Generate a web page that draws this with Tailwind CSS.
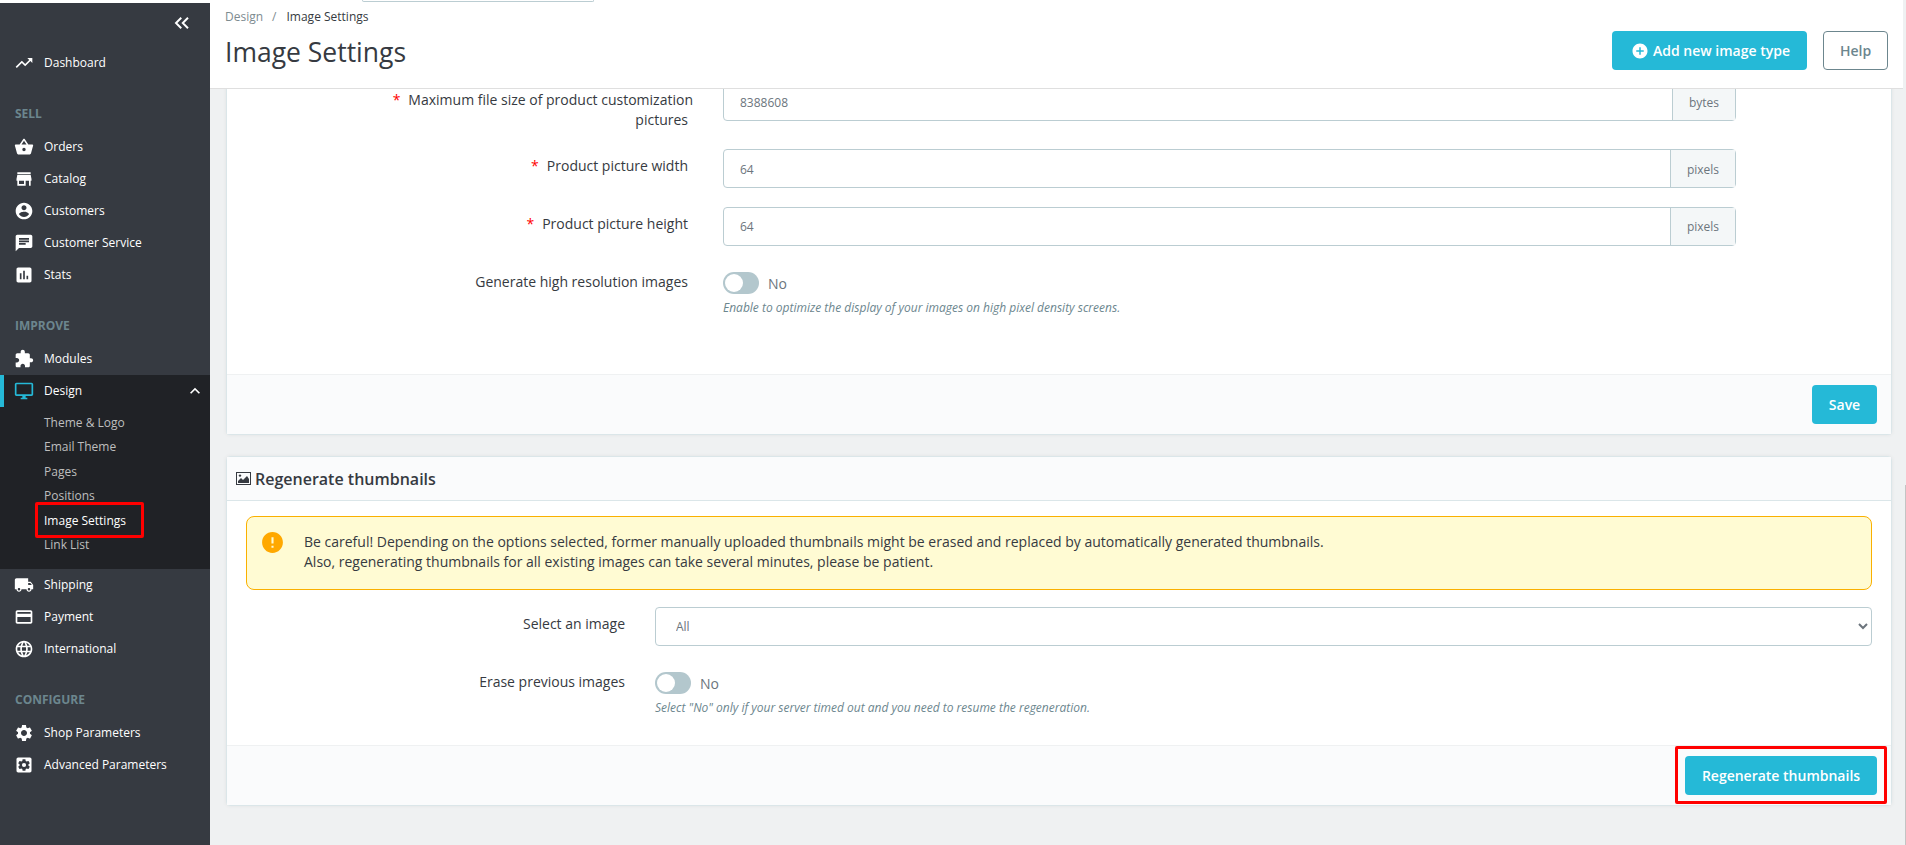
<!DOCTYPE html>
<html lang="en">
<head>
  <meta charset="UTF-8" />
  <title>Image Settings</title>
  <script src="https://cdn.jsdelivr.net/npm/@tailwindcss/browser@4"></script>
</head>
<body class="relative h-[845px] overflow-hidden bg-white font-['Open_Sans',sans-serif] text-[#363a41]">

  <div class="flex h-[845px]">

    <!-- Sidebar -->
    <aside class="w-[210px] shrink-0 mt-[3px] bg-[#363a41] text-[12px] text-white">
      <div class="h-[44px] flex justify-end pr-[19px] pt-[11px]">
        <svg class="w-[18px] h-[18px]" viewBox="0 0 24 24" fill="none" stroke="#fff" stroke-width="2.6"><path d="M11 5l-7 7 7 7M20 5l-7 7 7 7"/></svg>
      </div>

      <a class="h-8 flex items-center pl-[14px] gap-[10px]">
        <svg class="w-5 h-5" viewBox="0 0 24 24" fill="#fff"><path d="M16 6l2.29 2.29-4.88 4.88-4-4L2 16.59 3.41 18l6-6 4 4 6.3-6.29L22 12V6z"/></svg>
        Dashboard
      </a>

      <div class="mt-[25px] mb-[7px] h-5 leading-5 pl-[15px] font-bold text-[#6c868e]">SELL</div>
      <a class="h-8 flex items-center pl-[14px] gap-[10px]">
        <svg class="w-5 h-5" viewBox="0 0 24 24" fill="#fff"><path d="M17.21 9l-4.38-6.56c-.19-.28-.51-.42-.83-.42-.32 0-.64.14-.83.43L6.79 9H2c-.55 0-1 .45-1 1 0 .09.01.18.04.27l2.54 9.27c.23.84 1 1.46 1.92 1.46h13c.92 0 1.69-.62 1.93-1.46l2.54-9.27L23 10c0-.55-.45-1-1-1h-4.79zM9 9l3-4.4L15 9H9zm3 8c-1.1 0-2-.9-2-2s.9-2 2-2 2 .9 2 2-.9 2-2 2z"/></svg>
        Orders
      </a>
      <a class="h-8 flex items-center pl-[14px] gap-[10px]">
        <svg class="w-5 h-5" viewBox="0 0 24 24" fill="#fff"><path d="M20 4H4v2h16V4zm1 10v-2l-1-5H4l-1 5v2h1v6h10v-6h4v6h2v-6h1zm-9 4H6v-4h6v4z"/></svg>
        Catalog
      </a>
      <a class="h-8 flex items-center pl-[14px] gap-[10px]">
        <svg class="w-5 h-5" viewBox="0 0 24 24" fill="#fff"><path d="M12 2C6.48 2 2 6.48 2 12s4.48 10 10 10 10-4.48 10-10S17.52 2 12 2zm0 3c1.66 0 3 1.34 3 3s-1.34 3-3 3-3-1.34-3-3 1.34-3 3-3zm0 14.2c-2.5 0-4.71-1.28-6-3.22.03-1.99 4-3.08 6-3.08 1.99 0 5.97 1.09 6 3.08-1.29 1.94-3.5 3.22-6 3.22z"/></svg>
        Customers
      </a>
      <a class="h-8 flex items-center pl-[14px] gap-[10px]">
        <svg class="w-5 h-5" viewBox="0 0 24 24" fill="#fff"><path d="M20 2H4c-1.1 0-1.99.9-1.99 2L2 22l4-4h14c1.1 0 2-.9 2-2V4c0-1.1-.9-2-2-2zM6 9h12v2H6V9zm8 5H6v-2h8v2zm4-6H6V6h12v2z"/></svg>
        Customer Service
      </a>
      <a class="h-8 flex items-center pl-[14px] gap-[10px]">
        <svg class="w-5 h-5" viewBox="0 0 24 24" fill="#fff"><path d="M19 3H5c-1.1 0-2 .9-2 2v14c0 1.1.9 2 2 2h14c1.1 0 2-.9 2-2V5c0-1.1-.9-2-2-2zM9 17H7v-7h2v7zm4 0h-2V7h2v10zm4 0h-2v-4h2v4z"/></svg>
        Stats
      </a>

      <div class="mt-[25px] mb-[7px] h-5 leading-5 pl-[15px] font-bold text-[#6c868e]">IMPROVE</div>
      <a class="h-8 flex items-center pl-[14px] gap-[10px]">
        <svg class="w-5 h-5" viewBox="0 0 24 24" fill="#fff"><path d="M20.5 11H19V7c0-1.1-.9-2-2-2h-4V3.5C13 2.12 11.88 1 10.5 1S8 2.12 8 3.5V5H4c-1.1 0-1.99.9-1.99 2v3.8H3.5c1.49 0 2.7 1.21 2.7 2.7s-1.21 2.7-2.7 2.7H2V20c0 1.1.9 2 2 2h3.8v-1.5c0-1.49 1.21-2.7 2.7-2.7 1.49 0 2.7 1.21 2.7 2.7V22H17c1.1 0 2-.9 2-2v-4h1.5c1.38 0 2.5-1.12 2.5-2.5S21.88 11 20.5 11z"/></svg>
        Modules
      </a>

      <!-- Open group -->
      <div class="h-[194px] bg-[#202226]">
        <a class="h-8 flex items-center pl-[10px] gap-[10px] border-l-4 border-[#25b9d7]">
          <svg class="w-5 h-5" viewBox="0 0 24 24" fill="#25b9d7"><path d="M21 2H3c-1.1 0-2 .9-2 2v12c0 1.1.9 2 2 2h7v2H8v2h8v-2h-2v-2h7c1.1 0 2-.9 2-2V4c0-1.1-.9-2-2-2zm0 14H3V4h18v12z"/></svg>
          <span class="flex-1">Design</span>
          <svg class="w-5 h-5 mr-[5px]" viewBox="0 0 24 24" fill="#fff"><path d="M12 8l-6 6 1.41 1.41L12 10.83l4.59 4.58L18 14z"/></svg>
        </a>
        <div class="pt-[4px] pl-[44px] text-[#bebebe]">
          <div class="h-[24.4px] leading-[24px]">Theme &amp; Logo</div>
          <div class="h-[24.4px] leading-[24px]">Email Theme</div>
          <div class="h-[24.4px] leading-[24px]">Pages</div>
          <div class="h-[24.4px] leading-[24px]">Positions</div>
          <div class="h-[24.4px] leading-[24px] text-white font-medium">Image Settings</div>
          <div class="h-[24.4px] leading-[23px]">Link List</div>
        </div>
      </div>

      <a class="h-8 flex items-center pl-[14px] gap-[10px]">
        <svg class="w-5 h-5" viewBox="0 0 24 24" fill="#fff"><path d="M20 8h-3V4H3c-1.1 0-2 .9-2 2v11h2c0 1.66 1.34 3 3 3s3-1.34 3-3h6c0 1.66 1.34 3 3 3s3-1.34 3-3h2v-5l-3-4zM6 18.5c-.83 0-1.5-.67-1.5-1.5s.67-1.5 1.5-1.5 1.5.67 1.5 1.5-.67 1.5-1.5 1.5zm13.5-9l1.96 2.5H17V9.5h2.5zm-1.5 9c-.83 0-1.5-.67-1.5-1.5s.67-1.5 1.5-1.5 1.5.67 1.5 1.5-.67 1.5-1.5 1.5z"/></svg>
        Shipping
      </a>
      <a class="h-8 flex items-center pl-[14px] gap-[10px]">
        <svg class="w-5 h-5" viewBox="0 0 24 24" fill="#fff"><path d="M20 4H4c-1.11 0-1.99.89-1.99 2L2 18c0 1.11.89 2 2 2h16c1.11 0 2-.89 2-2V6c0-1.11-.89-2-2-2zm0 14H4v-6h16v6zm0-10H4V6h16v2z"/></svg>
        Payment
      </a>
      <a class="h-8 flex items-center pl-[14px] gap-[10px]">
        <svg class="w-5 h-5" viewBox="0 0 24 24" fill="#fff"><path d="M11.99 2C6.47 2 2 6.48 2 12s4.47 10 9.99 10C17.52 22 22 17.52 22 12S17.52 2 11.99 2zm6.93 6h-2.95c-.32-1.25-.78-2.45-1.38-3.56 1.84.63 3.37 1.91 4.33 3.56zM12 4.04c.83 1.2 1.48 2.53 1.91 3.96h-3.82c.43-1.43 1.08-2.76 1.91-3.96zM4.26 14C4.1 13.36 4 12.69 4 12s.1-1.36.26-2h3.38c-.08.66-.14 1.32-.14 2 0 .68.06 1.34.14 2H4.26zm.82 2h2.95c.32 1.25.78 2.45 1.38 3.56-1.84-.63-3.37-1.9-4.33-3.56zm2.95-8H5.08c.96-1.66 2.49-2.93 4.33-3.56C8.81 5.55 8.35 6.75 8.03 8zM12 19.96c-.83-1.2-1.48-2.53-1.91-3.96h3.82c-.43 1.43-1.08 2.76-1.91 3.96zM14.34 14H9.66c-.09-.66-.16-1.32-.16-2 0-.68.07-1.35.16-2h4.68c.09.65.16 1.32.16 2 0 .68-.07 1.34-.16 2zm.25 5.56c.6-1.11 1.06-2.31 1.38-3.56h2.95c-.96 1.65-2.49 2.93-4.33 3.56zM16.36 14c.08-.66.14-1.32.14-2 0-.68-.06-1.34-.14-2h3.38c.16.64.26 1.31.26 2s-.1 1.36-.26 2h-3.38z"/></svg>
        International
      </a>

      <div class="mt-[25px] mb-[7px] h-5 leading-5 pl-[15px] font-bold text-[#6c868e]">CONFIGURE</div>
      <a class="h-8 flex items-center pl-[14px] gap-[10px]">
        <svg class="w-5 h-5" viewBox="0 0 24 24" fill="#fff"><path d="M19.14 12.94c.04-.3.06-.61.06-.94 0-.32-.02-.64-.07-.94l2.03-1.58c.18-.14.23-.41.12-.61l-1.92-3.32c-.12-.22-.37-.29-.59-.22l-2.39.96c-.5-.38-1.03-.7-1.62-.94l-.36-2.54c-.04-.24-.24-.41-.48-.41h-3.84c-.24 0-.43.17-.47.41l-.36 2.54c-.59.24-1.13.57-1.62.94l-2.39-.96c-.22-.08-.47 0-.59.22L2.74 8.87c-.12.21-.08.47.12.61l2.03 1.58c-.05.3-.09.63-.09.94s.02.64.07.94l-2.03 1.58c-.18.14-.23.41-.12.61l1.92 3.32c.12.22.37.29.59.22l2.39-.96c.5.38 1.03.7 1.62.94l.36 2.54c.05.24.24.41.48.41h3.84c.24 0 .44-.17.47-.41l.36-2.54c.59-.24 1.13-.56 1.62-.94l2.39.96c.22.08.47 0 .59-.22l1.92-3.32c.12-.22.07-.47-.12-.61l-2.01-1.58zM12 15.6c-1.98 0-3.6-1.62-3.6-3.6s1.62-3.6 3.6-3.6 3.6 1.62 3.6 3.6-1.62 3.6-3.6 3.6z"/></svg>
        Shop Parameters
      </a>
      <a class="h-8 flex items-center pl-[14px] gap-[10px]">
        <svg class="w-5 h-5" viewBox="0 0 24 24"><path fill="#fff" d="M19 3H5c-1.11 0-2 .9-2 2v14c0 1.1.89 2 2 2h14c1.11 0 2-.9 2-2V5c0-1.1-.89-2-2-2z"/><path fill="#363a41" d="M17.25 12c0 .23-.02.46-.05.68l1.48 1.16c.13.11.17.3.08.45l-1.4 2.42c-.09.15-.27.21-.43.15l-1.74-.7c-.36.28-.76.51-1.18.69l-.26 1.85c-.03.17-.18.3-.35.3h-2.8c-.17 0-.32-.13-.35-.29l-.26-1.85c-.43-.18-.82-.41-1.18-.69l-1.74.7c-.16.06-.34 0-.43-.15l-1.4-2.42c-.09-.15-.05-.34.08-.45l1.48-1.16c-.03-.23-.05-.46-.05-.69 0-.23.02-.46.05-.68l-1.48-1.16c-.13-.11-.17-.3-.08-.45l1.4-2.42c.09-.15.27-.21.43-.15l1.74.7c.36-.28.76-.51 1.18-.69l.26-1.85c.03-.17.18-.3.35-.3h2.8c.17 0 .32.13.35.29l.26 1.85c.43.18.82.41 1.18.69l1.74-.7c.16-.06.34 0 .43.15l1.4 2.42c.09.15.05.34-.08.45l-1.48 1.16c.03.23.05.46.05.69z"/><circle cx="12" cy="12" r="2.5" fill="#fff"/></svg>
        Advanced Parameters
      </a>
    </aside>

    <!-- Main column -->
    <div class="flex-1 min-w-0 bg-[#eff1f2]">

      <header class="relative z-10 w-[1693px] h-[89px] bg-white border-b border-[#dfdfdf] pl-[15px] pr-[15px] flex justify-between">
        <div>
          <div class="pt-[8px] h-[26px] text-[12px] leading-[18px] flex gap-[9px]">
            <span class="text-[#7d8b90]">Design</span><span class="text-[#7d8b90]">/</span><span class="ml-[1px]">Image Settings</span>
          </div>
          <h1 class="mt-[8px] text-[26.5px] leading-[36px] font-normal">Image Settings</h1>
        </div>
        <div class="flex gap-4 pt-[31px]">
          <button class="h-[39px] w-[195px] pl-[19px] bg-[#25b9d7] rounded-[4px] text-white text-[14px] font-semibold flex items-center gap-[4px]">
            <svg class="w-[18px] h-[18px]" viewBox="0 0 24 24" fill="#fff"><path d="M12 2C6.48 2 2 6.48 2 12s4.48 10 10 10 10-4.48 10-10S17.52 2 12 2zm5 11h-4v4h-2v-4H7v-2h4V7h2v4h4v2z"/></svg>
            Add new image type
          </button>
          <button class="h-[39px] w-[65px] bg-white border border-[#6c868e] rounded-[4px] text-[#6c868e] text-[14px] font-semibold">Help</button>
        </div>
      </header>

      <main class="-mt-[7px] pl-4 pr-[14px]">

        <!-- Customization pictures card -->
        <section class="bg-white border border-t-0 border-[#dbe6e9] rounded-b-[4px] shadow-[0_0_4px_rgba(0,0,0,0.06)]">
          <div class="pb-[58px] text-[14px]">
            <div class="flex mb-[19px]">
              <label class="w-[466px] pt-[8px] leading-5 text-right"><span class="text-[#f00] mr-[8px]">*</span>Maximum file size of product customization<br /><span class="pr-[5px]">pictures</span></label>
              <div class="ml-[30px] w-[1013px] h-[39px] flex border border-[#bbcdd2] rounded-[4px] text-[12px]">
                <input value="8388608" class="flex-1 min-w-0 pl-4 pt-[2px] outline-none text-[#6c757d]" />
                <span class="w-[63px] border-l border-[#bbcdd2] bg-[#f4f7f8] text-[#6c757d] text-center leading-[39px]">bytes</span>
              </div>
            </div>
            <div class="flex mb-[19px]">
              <label class="w-[461px] pt-[7px] leading-5 text-right"><span class="text-[#f00] mr-[8px]">*</span>Product picture width</label>
              <div class="ml-[35px] w-[1013px] h-[39px] flex border border-[#bbcdd2] rounded-[4px] text-[12px]">
                <input value="64" class="flex-1 min-w-0 pl-4 pt-[2px] outline-none text-[#6c757d]" />
                <span class="w-[65px] border-l border-[#bbcdd2] bg-[#f4f7f8] text-[#6c757d] text-center leading-[39px]">pixels</span>
              </div>
            </div>
            <div class="flex mb-[26px]">
              <label class="w-[461px] pt-[7px] leading-5 text-right"><span class="text-[#f00] mr-[8px]">*</span>Product picture height</label>
              <div class="ml-[35px] w-[1013px] h-[39px] flex border border-[#bbcdd2] rounded-[4px] text-[12px]">
                <input value="64" class="flex-1 min-w-0 pl-4 outline-none text-[#6c757d]" />
                <span class="w-[65px] border-l border-[#bbcdd2] bg-[#f4f7f8] text-[#6c757d] text-center leading-[37px]">pixels</span>
              </div>
            </div>
            <div class="flex">
              <label class="w-[461px] leading-5 text-right">Generate high resolution images</label>
              <div class="ml-[35px]">
                <div class="flex items-center gap-[9px]">
                  <span class="w-9 h-[22px] rounded-full bg-[#b3c7cd] p-[2px]"><span class="block w-[18px] h-[18px] rounded-full bg-white"></span></span>
                  <span class="text-[#6c757d]">No</span>
                </div>
                <p class="mt-[6px] text-[12px] leading-4 italic text-[#6c868e]">Enable to optimize the display of your images on high pixel density screens.</p>
              </div>
            </div>
          </div>
          <div class="h-[60px] bg-[#fafbfc] border-t border-[#eff1f2] flex justify-end pt-[10px] pr-[14px]">
            <button class="h-[39px] w-[65px] bg-[#25b9d7] rounded-[4px] text-white text-[14px] font-semibold">Save</button>
          </div>
        </section>

        <!-- Regenerate thumbnails card -->
        <section class="mt-[21px] bg-white border border-[#dbe6e9] rounded-[4px] shadow-[0_0_4px_rgba(0,0,0,0.06)]">
          <div class="h-[44px] bg-[#fafbfc] border-b border-[#dbe6e9] flex items-center pl-[9px] gap-[4px] text-[16px] font-semibold">
            <svg class="w-[15px] h-[13px]" viewBox="0 0 15 13"><rect x=".5" y=".5" width="14" height="12" fill="none" stroke="#363a41"/><path d="M2 11V9l3-3 2 2 4-4 2 3v4z" fill="#363a41"/><circle cx="4" cy="3.6" r="1.2" fill="#363a41"/></svg>
            Regenerate thumbnails
          </div>
          <div class="pt-[15px] px-[19px] pb-[29px] text-[14px]">
            <div class="h-[74px] bg-[#fffbd3] border border-[#fab000] rounded-[8px] flex pl-[13px] pt-[15px]">
              <svg class="w-[25px] h-[25px] -mt-[2px] shrink-0" viewBox="0 0 24 24" fill="#ffa800"><path d="M12 2C6.48 2 2 6.48 2 12s4.48 10 10 10 10-4.48 10-10S17.52 2 12 2zm1 15h-2v-2h2v2zm0-4h-2V7h2v6z"/></svg>
              <p class="ml-[19px] leading-[20px]">Be careful! Depending on the options selected, former manually uploaded thumbnails might be erased and replaced by automatically generated thumbnails.<br />Also, regenerating thumbnails for all existing images can take several minutes, please be patient.</p>
            </div>
            <div class="flex mt-[17px] mb-[26px]">
              <label class="w-[379px] pt-[7px] leading-5 text-right">Select an image</label>
              <select class="ml-[30px] flex-1 h-[39px] pl-4 bg-white border border-[#bbcdd2] rounded-[4px] text-[12px] text-[#6c757d] outline-none"><option>All</option></select>
            </div>
            <div class="flex">
              <label class="w-[379px] leading-5 text-right">Erase previous images</label>
              <div class="ml-[30px]">
                <div class="flex items-center gap-[9px]">
                  <span class="w-9 h-[22px] rounded-full bg-[#b3c7cd] p-[2px]"><span class="block w-[18px] h-[18px] rounded-full bg-white"></span></span>
                  <span class="text-[#6c757d]">No</span>
                </div>
                <p class="mt-[6px] text-[12px] leading-4 italic text-[#6c868e]">Select "No" only if your server timed out and you need to resume the regeneration.</p>
              </div>
            </div>
          </div>
          <div class="h-[60px] bg-[#fafbfc] border-t border-[#eff1f2] flex justify-end pt-[10px] pr-[14px]">
            <button class="h-[39px] w-[192px] bg-[#25b9d7] rounded-[4px] text-white text-[14px] font-semibold">Regenerate thumbnails</button>
          </div>
        </section>
      </main>
    </div>
  </div>

  <!-- Annotations and overlays -->
  <div class="absolute z-20 left-[362px] top-0 w-[232px] h-[2px] border-b border-x border-[#bbcdd2] rounded-b-[4px]"></div>
  <div class="absolute z-20 left-[35px] top-[502px] w-[109px] h-[36px] border-[3px] border-[#f00] rounded-[2px]"></div>
  <div class="absolute z-20 left-[1675px] top-[746px] w-[212px] h-[58px] border-[3px] border-[#f00] rounded-[2px]"></div>
  <div class="absolute z-20 left-[1905px] top-[485px] w-px h-[360px] bg-[#c4c4c4]"></div>
</body>
</html>
